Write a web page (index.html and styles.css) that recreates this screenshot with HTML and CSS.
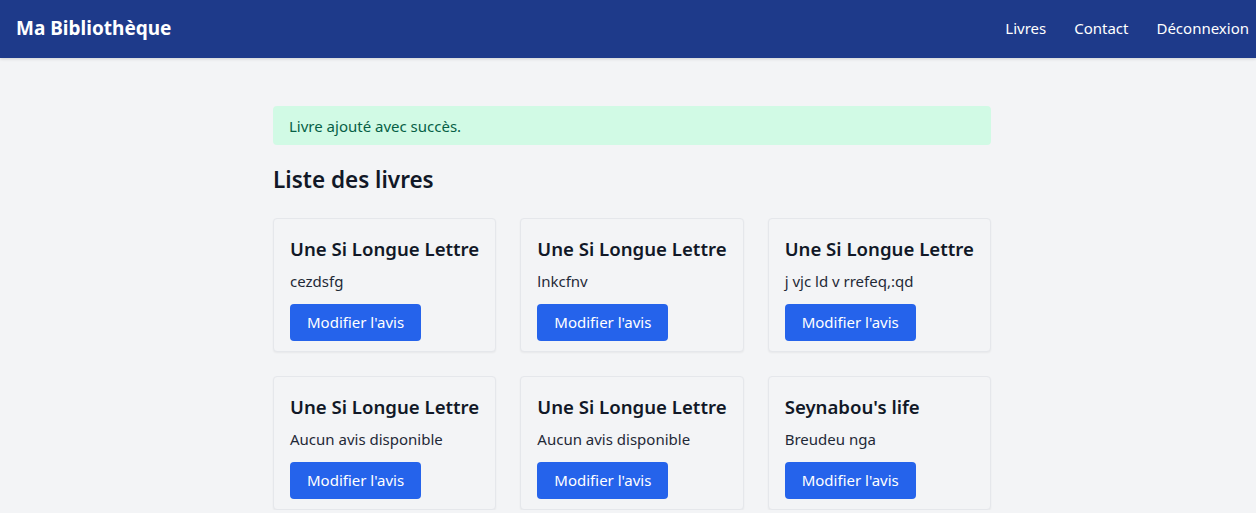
FILE: index.html
```html
<!DOCTYPE html>
<html lang="fr">
<head>
<meta charset="utf-8">
<title>Ma Bibliothèque</title>
<link rel="stylesheet" href="styles.css">
</head>
<body>
<nav class="navbar">
  <a class="brand" href="#">Ma Bibliothèque</a>
  <div class="nav-links">
    <a href="#">Livres</a>
    <a href="#">Contact</a>
    <a href="#">Déconnexion</a>
  </div>
</nav>
<main class="main">
  <div class="container">
    <div class="alert">Livre ajouté avec succès.</div>
    <h1 class="page-title">Liste des livres</h1>
    <div class="grid">
      <div class="card">
        <h2 class="card-title">Une Si Longue Lettre</h2>
        <p class="card-text">cezdsfg</p>
        <a class="btn" href="#">Modifier l'avis</a>
      </div>
      <div class="card">
        <h2 class="card-title">Une Si Longue Lettre</h2>
        <p class="card-text">lnkcfnv</p>
        <a class="btn" href="#">Modifier l'avis</a>
      </div>
      <div class="card">
        <h2 class="card-title">Une Si Longue Lettre</h2>
        <p class="card-text">j vjc ld v rrefeq,:qd</p>
        <a class="btn" href="#">Modifier l'avis</a>
      </div>
      <div class="card">
        <h2 class="card-title">Une Si Longue Lettre</h2>
        <p class="card-text">Aucun avis disponible</p>
        <a class="btn" href="#">Modifier l'avis</a>
      </div>
      <div class="card">
        <h2 class="card-title">Une Si Longue Lettre</h2>
        <p class="card-text">Aucun avis disponible</p>
        <a class="btn" href="#">Modifier l'avis</a>
      </div>
      <div class="card">
        <h2 class="card-title">Seynabou's life</h2>
        <p class="card-text">Breudeu nga</p>
        <a class="btn" href="#">Modifier l'avis</a>
      </div>
    </div>
  </div>
</main>
</body>
</html>
```
FILE: styles.css
```css
* { box-sizing: border-box; }
html, body { margin: 0; padding: 0; }
body {
  background: #f3f4f6;
  font-family: "Noto Sans", "Open Sans", sans-serif;
  color: #111827;
  font-size: 15px;
  line-height: 24px;
}
a { text-decoration: none; }
.navbar {
  height: 58px;
  background: #1e3a8a;
  display: flex;
  align-items: center;
  justify-content: space-between;
  padding: 0 7px 2px 16px;
  box-shadow: 0 1px 3px rgba(0,0,0,0.15);
}
.brand {
  color: #fff;
  font-weight: 700;
  font-size: 19px;
  line-height: 28px;
}
.nav-links {
  display: flex;
  gap: 28px;
}
.nav-links a {
  color: #fff;
  font-size: 15px;
}
.main {
  padding: 48px 0 0 8px;
}
.container {
  width: 718px;
  margin: 0 auto;
}
.alert {
  background: #d1fae5;
  color: #065f46;
  border-radius: 4px;
  padding: 8px 16px 7px;
  margin-bottom: 19px;
}
.page-title {
  margin: 0 0 22px;
  font-size: 22.5px;
  line-height: 32px;
  font-weight: 600;
  color: #111827;
}
.grid {
  display: grid;
  grid-template-columns: repeat(3, 1fr);
  gap: 24px;
}
.card {
  border: 1px solid #e5e7eb;
  border-radius: 4px;
  background: #f3f4f6;
  box-shadow: 0 1px 2px rgba(0,0,0,0.05);
  padding: 16px 16px 10px;
}
.card-title {
  margin: 0 0 6px;
  font-size: 18.6px;
  line-height: 28px;
  font-weight: 600;
  color: #111827;
  white-space: nowrap;
}
.card-text {
  margin: 0 0 11px;
  color: #1f2937;
}
.btn {
  display: inline-block;
  background: #2563eb;
  color: #fff;
  border-radius: 4px;
  padding: 6px 17px 7px;
  line-height: 24px;
}
```
